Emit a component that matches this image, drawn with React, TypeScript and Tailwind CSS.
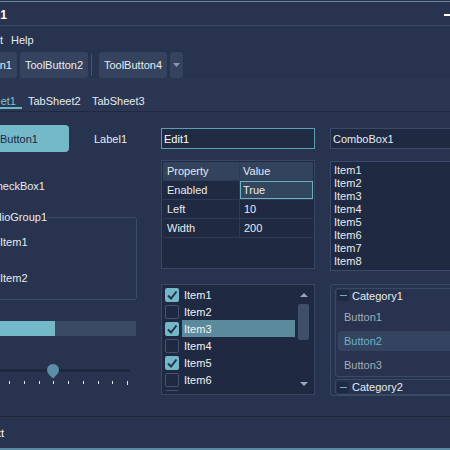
import { ReactNode } from 'react'

// text that is cut by the left edge of the window: right end is what we see
function Cut({ className, children }: { className: string; children: ReactNode }) {
  return (
    <div className={`flex justify-end shrink-0 ${className}`}>
      <span className="shrink-0 whitespace-nowrap">{children}</span>
    </div>
  )
}

function Check() {
  return (
    <svg width="14" height="14" viewBox="0 0 14 14">
      <polyline points="3,7.5 6,10.5 11.5,3.5" fill="none" stroke="#24304a" strokeWidth="2" />
    </svg>
  )
}

function Minus() {
  return (
    <div className="w-[12px] h-[11px] bg-[#1f2a42] rounded-[1px] flex items-center justify-center">
      <div className="w-[7px] h-[1px] bg-[#6ab3c6]" />
    </div>
  )
}

const gridRows = [
  ['Enabled', 'True'],
  ['Left', '10'],
  ['Width', '200'],
]

const checkItems = [
  { name: 'Item1', checked: true },
  { name: 'Item2', checked: false },
  { name: 'Item3', checked: true, selected: true },
  { name: 'Item4', checked: false },
  { name: 'Item5', checked: true },
  { name: 'Item6', checked: false },
  { name: 'Item7', checked: false },
]

const listItems = ['Item1', 'Item2', 'Item3', 'Item4', 'Item5', 'Item6', 'Item7', 'Item8']

export default function App() {
  return (
    <div className="w-[450px] h-[450px] overflow-hidden bg-[#28344f] text-[#e6ebf1] text-[11px] leading-[14px] font-['Liberation_Sans',Arial,sans-serif]">
      <div className="h-[1px]" />
      <div className="h-[1px] bg-[#6b82a2]" />

      {/* 标题栏 */}
      <div className="h-[23px] flex items-center justify-between pt-[2px]">
        <Cut className="w-[7px] font-bold text-[12px] text-white">Form1</Cut>
        <div className="w-[6px] h-[2px] bg-white" />
      </div>
      <div className="h-[1px] bg-[#3e4d6a]" />

      {/* 菜单 */}
      <div className="h-[25px] flex items-center pt-[3px]">
        <Cut className="w-[3px]">Edit</Cut>
        <span className="ml-[8px]">Help</span>
      </div>

      {/* 工具栏 */}
      <div className="h-[27px] pt-[1px] flex">
        <div className="h-[26px] w-[17px] bg-[#35435f] rounded-r-[3px] flex items-center justify-end pr-[5px]">
          <span className="shrink-0 whitespace-nowrap">ToolButton1</span>
        </div>
        <div className="h-[26px] w-[68px] ml-[3px] bg-[#35435f] rounded-[3px] flex items-center justify-center">ToolButton2</div>
        <div className="h-[22px] w-[1px] mt-[2px] ml-[3px] bg-[#45546f]" />
        <div className="h-[26px] w-[68px] ml-[7px] bg-[#35435f] rounded-[3px] flex items-center justify-center">ToolButton4</div>
        <div className="h-[26px] w-[13px] ml-[3px] bg-[#35435f] rounded-[3px] flex items-center justify-center">
          <svg width="7" height="4" viewBox="0 0 7 4">
            <polygon points="0,0 7,0 3.5,4" fill="#8d99ad" />
          </svg>
        </div>
      </div>

      {/* 页签 */}
      <div className="h-[31px] bg-[#2a3652] flex items-start pt-[17px]">
        <div className="w-[22px] flex flex-col">
          <Cut className="h-[12px] leading-[12px] pr-[6px] text-[#7dc1d3]">TabSheet1</Cut>
          <div className="h-[2px] bg-[#6fb5c8]" />
        </div>
        <div className="w-[64px] pl-[6px] h-[12px] leading-[12px]">TabSheet2</div>
        <div className="w-[64px] pl-[6px] h-[12px] leading-[12px]">TabSheet3</div>
      </div>
      <div className="h-[2px] bg-[#2a3652]" />
      <div className="h-[1px] bg-[#1e2840]" />

      {/* 主体 */}
      <div className="h-[304px] flex">
        {/* 左列 */}
        <div className="w-[137px] shrink-0 flex flex-col">
          <div className="mt-[13px] h-[27px] flex items-center">
            <div className="w-[69px] h-full bg-[#74b9c9] rounded-r-[4px] flex items-center text-[#1d2840]">Button1</div>
            <span className="ml-[25px]">Label1</span>
          </div>
          <Cut className="mt-[27px] h-[14px] w-[45px]">CheckBox1</Cut>
          <fieldset className="mt-[17px] -ml-[20px] w-[157px] h-[90px] border border-[#3a4c69] rounded-[3px]">
            <legend className="w-[66px] leading-[14px]">
              <div className="flex justify-end">
                <span className="shrink-0 whitespace-nowrap">RadioGroup1</span>
              </div>
            </legend>
            <div className="pl-[19px] mt-[11px] h-[14px]">Item1</div>
            <div className="pl-[19px] mt-[22px] h-[14px]">Item2</div>
          </fieldset>
          <div className="mt-[21px] h-[15px] w-[136px] bg-[#3a4964] flex">
            <div className="w-[55px] h-full bg-[#74b9c9]" />
          </div>
          <div className="mt-[33px] relative w-[130px] h-[3px] bg-[#1d283e]">
            <div className="absolute left-[47px] top-[-5px] w-[12px] h-[12px] bg-[#5a8fa7] rounded-full rounded-br-none rotate-45" />
          </div>
          <div className="mt-[9px] ml-[9px] w-[119px] flex justify-between items-start">
            {[0, 1, 2, 3, 4, 5, 6, 7].map(i => (
              <div key={i} className="w-[1px] h-[3px] bg-[#dfe6ee]" />
            ))}
            <div className="w-[1px] h-[4px] bg-[#dfe6ee]" />
          </div>
        </div>

        {/* 中列 */}
        <div className="ml-[24px] w-[154px] shrink-0 flex flex-col">
          <div className="mt-[16px] h-[21px] border border-[#5c9fb0] bg-[#1f2a43] pl-[2px] flex items-center text-white">Edit1</div>

          <div className="mt-[11px] h-[109px] border border-[#394862] bg-[#1f2a42] p-[1px]">
            <div className="grid grid-cols-[76px_73px] gap-[1px] pb-[1px] bg-[#2e3b55]">
              <div className="h-[18px] bg-[#33425d] flex items-center pl-[4px]">Property</div>
              <div className="h-[18px] bg-[#33425d] flex items-center pl-[3px]">Value</div>
              {gridRows.map(([k, v], i) => (
                <div key={k} className="contents">
                  <div className="h-[18px] bg-[#1f2a42] flex items-center pl-[4px]">{k}</div>
                  {i === 0 ? (
                    <div className="h-[18px] bg-[#32465e] border border-[#6ab1c2] flex items-center pl-[2px]">{v}</div>
                  ) : (
                    <div className="h-[18px] bg-[#1f2a42] flex items-center pl-[4px]">{v}</div>
                  )}
                </div>
              ))}
            </div>
          </div>

          <div className="mt-[15px] h-[111px] border border-[#394862] bg-[#1f2a42] flex items-start">
            <div className="flex-1 h-[106px] overflow-hidden pt-[1px] flex flex-col">
              {checkItems.map(it => (
                <div key={it.name} className="h-[17px] shrink-0 flex items-center">
                  <div
                    className={
                      it.checked
                        ? 'ml-[3px] w-[14px] h-[14px] rounded-[2px] bg-[#73b8c8] shrink-0'
                        : 'ml-[3px] w-[14px] h-[14px] rounded-[2px] border border-[#44536e] shrink-0'
                    }
                  >
                    {it.checked && <Check />}
                  </div>
                  <div className={`ml-[3px] flex-1 h-full pl-[2px] flex items-center text-[#eef2f6] ${it.selected ? 'bg-[#5a8a9c]' : ''}`}>
                    {it.name}
                  </div>
                </div>
              ))}
            </div>
            <div className="w-[17px] h-full mr-[2px] flex flex-col items-center">
              <svg className="mt-[8px]" width="8" height="4" viewBox="0 0 8 4">
                <polygon points="0,4 8,4 4,0" fill="#9aa6b8" />
              </svg>
              <div className="mt-[7px] w-[11px] h-[36px] rounded-[2px] bg-[#3f4e6a]" />
              <div className="flex-1" />
              <svg className="mb-[8px]" width="8" height="4" viewBox="0 0 8 4">
                <polygon points="0,0 8,0 4,4" fill="#9aa6b8" />
              </svg>
            </div>
          </div>
        </div>

        {/* 右列 */}
        <div className="ml-[15px] w-[150px] shrink-0 flex flex-col">
          <div className="mt-[16px] h-[21px] border border-[#3b4a66] bg-[#1f2a42] pl-[2px] flex items-center">ComboBox1</div>

          <div className="mt-[12px] h-[110px] border border-[#3b4a66] bg-[#1f2a42] pt-[2px] pl-[3px]">
            {listItems.map(s => (
              <div key={s} className="h-[13px] leading-[13px]">{s}</div>
            ))}
          </div>

          <div className="mt-[13px] h-[112px] border border-[#3a4964] rounded-[2px] pt-[3px] pl-[4px] flex flex-col">
            <div className="h-[89px] border border-[#3a4964] rounded-[3px] flex flex-col pb-[1px]">
              <div className="h-[13px] flex items-center">
                <div className="ml-[1px]"><Minus /></div>
                <span className="ml-[3px]">Category1</span>
              </div>
              <div className="mt-[5px] h-[20px] ml-[2px] pl-[6px] flex items-center text-[#a6abb4]">Button1</div>
              <div className="mt-[4px] h-[20px] ml-[2px] pl-[6px] flex items-center text-[#6ab2c6] bg-[#34435f] rounded-l-[3px]">Button2</div>
              <div className="mt-[4px] h-[20px] ml-[2px] pl-[6px] flex items-center text-[#a6abb4]">Button3</div>
            </div>
            <div className="mt-[2px] h-[16px] border border-[#3a4964] rounded-[3px] flex items-center">
              <div className="ml-[1px]"><Minus /></div>
              <span className="ml-[3px]">Category2</span>
            </div>
          </div>
        </div>
      </div>

      {/* 状态栏 */}
      <div className="h-[1px] bg-[#1b2539]" />
      <div className="h-[31px] flex items-center pt-[1px]">
        <Cut className="w-[4px] text-white">Text</Cut>
      </div>
      <div className="h-[2px] bg-[#5a8aa3]" />
    </div>
  )
}
